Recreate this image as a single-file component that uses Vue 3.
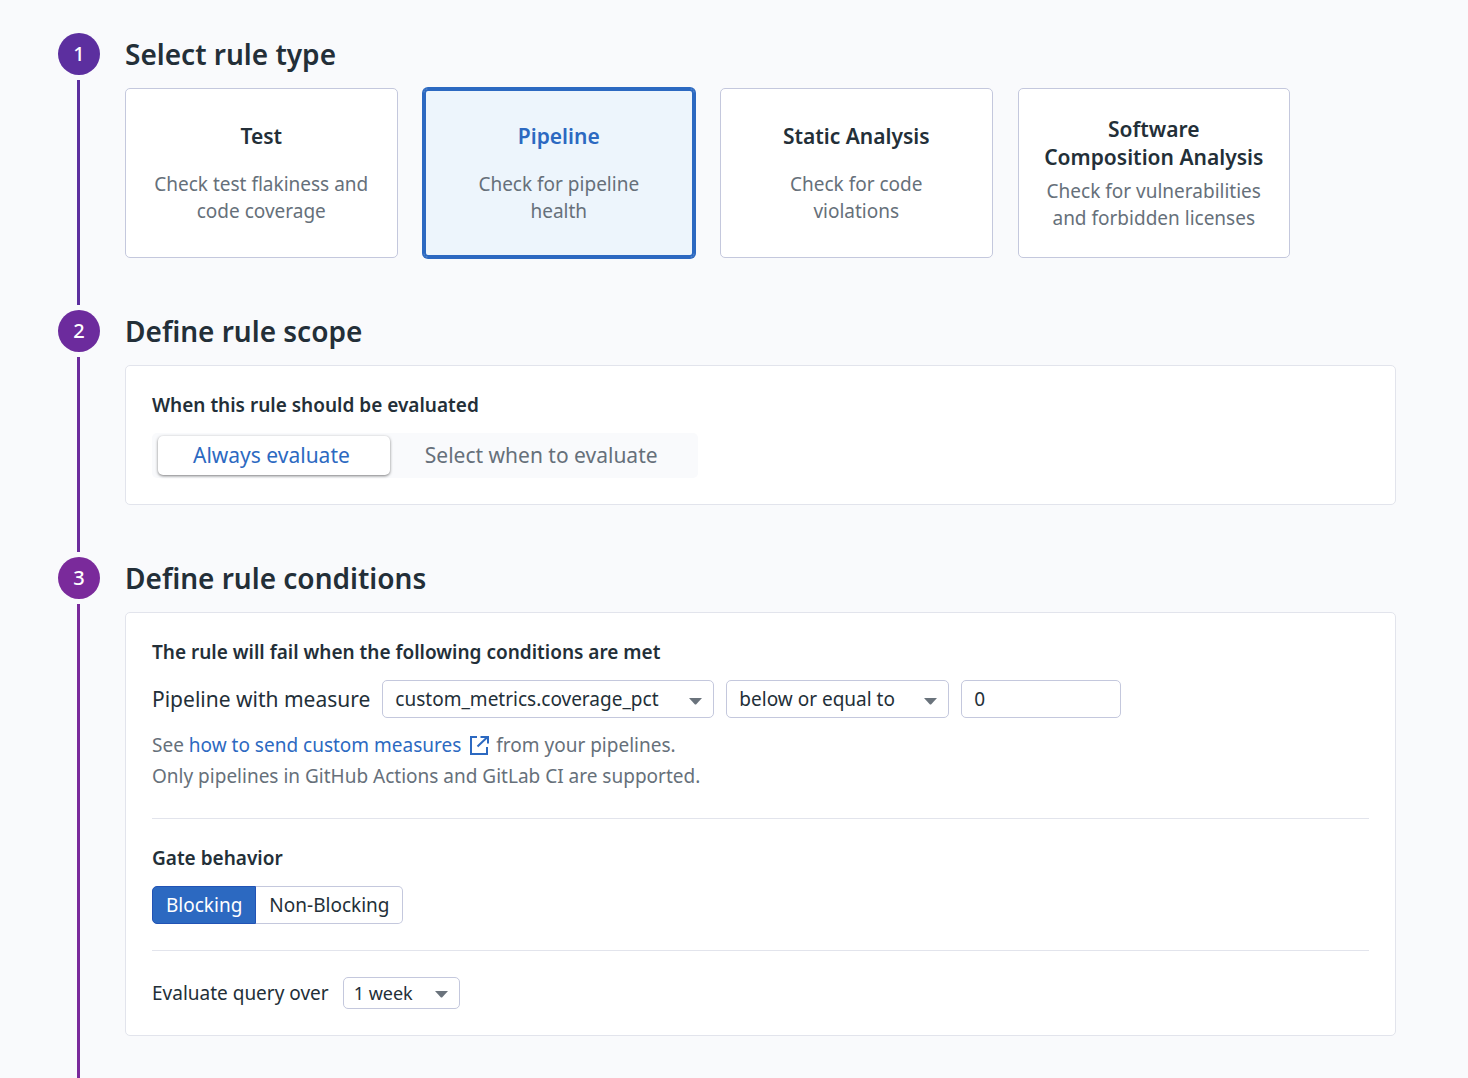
<script setup>
import { ref } from 'vue'

const ruleTypes = [
  { id: 'test', title: 'Test', text: 'Check test flakiness and code coverage' },
  { id: 'pipeline', title: 'Pipeline', text: 'Check for pipeline health' },
  { id: 'static', title: 'Static Analysis', text: 'Check for code violations' },
  { id: 'sca', title: 'Software Composition Analysis', text: 'Check for vulnerabilities and forbidden licenses' },
]
const ruleType = ref('pipeline')
const scope = ref('always')
const blocking = ref(true)
const measure = ref('custom_metrics.coverage_pct')
const operator = ref('below or equal to')
const threshold = ref('0')
const period = ref('1 week')
</script>

<template>
  <main class="page">
    <section class="step step-one">
      <div class="rail"><span class="badge">1</span><span class="line"></span></div>
      <div class="content">
        <h2>Select rule type</h2>
        <div class="cards">
          <button
            v-for="type in ruleTypes"
            :key="type.id"
            type="button"
            class="card"
            :class="{ selected: ruleType === type.id }"
            :aria-pressed="ruleType === type.id"
            @click="ruleType = type.id"
          >
            <span class="card-title">{{ type.title }}</span>
            <span class="card-text">{{ type.text }}</span>
          </button>
        </div>
      </div>
    </section>

    <section class="step step-two">
      <div class="rail"><span class="badge">2</span><span class="line"></span></div>
      <div class="content">
        <h2>Define rule scope</h2>
        <div class="panel">
          <h3>When this rule should be evaluated</h3>
          <div class="switch">
            <button type="button" :class="{ on: scope === 'always' }" @click="scope = 'always'">Always evaluate</button>
            <button type="button" :class="{ on: scope === 'select' }" @click="scope = 'select'">Select when to evaluate</button>
          </div>
        </div>
      </div>
    </section>

    <section class="step step-three">
      <div class="rail"><span class="badge">3</span><span class="line"></span></div>
      <div class="content">
        <h2>Define rule conditions</h2>
        <div class="panel">
          <h3>The rule will fail when the following conditions are met</h3>
          <div class="row">
            <label class="lead" for="measure">Pipeline with measure</label>
            <span class="select measure">
              <select id="measure" v-model="measure">
                <option>custom_metrics.coverage_pct</option>
              </select>
              <svg class="caret" viewBox="0 0 13 7" aria-hidden="true"><path d="M0 0H13L7.500 6Q6.500 7 5.500 6Z" /></svg>
            </span>
            <span class="select operator">
              <select v-model="operator" aria-label="Comparison">
                <option>below or equal to</option>
                <option>above or equal to</option>
              </select>
              <svg class="caret" viewBox="0 0 13 7" aria-hidden="true"><path d="M0 0H13L7.500 6Q6.500 7 5.500 6Z" /></svg>
            </span>
            <input v-model="threshold" class="threshold" type="text" aria-label="Threshold" />
          </div>
          <p class="hint">
            See <a href="#">how to send custom measures<svg class="external" viewBox="0 0 20 20" aria-hidden="true"><path d="M8 2H2V19H18V12M11.500 2H19V8.500M18.500 2L8.500 11.500" /></svg></a> from your pipelines.<br />
            Only pipelines in GitHub Actions and GitLab CI are supported.
          </p>
          <hr />
          <h3>Gate behavior</h3>
          <div class="toggle">
            <button type="button" :class="{ on: blocking }" @click="blocking = true">Blocking</button>
            <button type="button" :class="{ on: !blocking }" @click="blocking = false">Non-Blocking</button>
          </div>
          <hr />
          <div class="row row-period">
            <label for="period">Evaluate query over</label>
            <span class="select period">
              <select id="period" v-model="period">
                <option>1 week</option>
                <option>2 weeks</option>
              </select>
              <svg class="caret" viewBox="0 0 13 7" aria-hidden="true"><path d="M0 0H13L7.500 6Q6.500 7 5.500 6Z" /></svg>
            </span>
          </div>
        </div>
      </div>
    </section>
  </main>
</template>

<style>
body {
  background: #f9fafc;
}
</style>

<style scoped>
.page {
  box-sizing: border-box;
  min-height: 100vh;
  display: flex;
  flex-direction: column;
  padding: 33px 72px 0 58px;
  color: #232f38;
  font: 19px/27px 'Noto Sans', sans-serif;
}
.page * {
  box-sizing: border-box;
}
button,
select,
input {
  margin: 0;
  color: inherit;
  font: inherit;
}
button {
  cursor: pointer;
}
.step {
  display: flex;
  gap: 25px;
}
.step-one { --tone: #5c2f9f; }
.step-two { --tone: #6c2b9d; }
.step-three { --tone: #7a2a9b; flex: 1; }
.rail {
  width: 42px;
  flex: none;
  display: flex;
  flex-direction: column;
}
.badge {
  width: 42px;
  height: 42px;
  border-radius: 50%;
  background: var(--tone);
  color: #fff;
  font-size: 20px;
  font-weight: 500;
  line-height: 41px;
  text-align: center;
}
.line {
  flex: 1;
  width: 3px;
  margin: 5px 0 5px 19px;
  background: var(--tone);
}
.step-three .line {
  margin-bottom: 0;
}
.content {
  flex: 1;
  min-width: 0;
  padding-bottom: 52px;
}
.step-three .content {
  padding-bottom: 42px;
}
h2 {
  margin: 0 0 12px;
  font-size: 28px;
  font-weight: 600;
  line-height: 43px;
}
h3 {
  margin: 0 0 14px;
  font-size: 19px;
  font-weight: 600;
  line-height: 27px;
}
.cards {
  display: grid;
  grid-template-columns: repeat(4, 1fr);
  gap: 25px;
  max-width: 1165px;
}
.card {
  height: 170px;
  display: flex;
  flex-direction: column;
  align-items: center;
  justify-content: center;
  gap: 7px;
  padding: 0 25px;
  border: 1px solid #c4c8dd;
  border-radius: 5px;
  background: #fff;
}
.card-title {
  min-height: 42px;
  font-size: 21px;
  font-weight: 600;
  line-height: 28px;
}
.card-text {
  color: #66707a;
}
.card.selected {
  border-color: #2c69c1;
  background: #edf5fc;
  box-shadow: 0 0 0 1px #2c69c1, inset 0 0 0 2px #2c69c1;
}
.selected .card-title {
  color: #2c69c1;
}
.panel {
  padding: 26px;
  border: 1px solid #e2e4ec;
  border-radius: 5px;
  background: #fff;
}
.switch {
  width: fit-content;
  display: flex;
  padding: 3px 0 3px 6px;
  border-radius: 5px;
  background: #f9fafc;
}
.switch button {
  height: 39px;
  padding: 0 40px 0 35px;
  border: 0;
  border-radius: 5px;
  background: none;
  color: #66707a;
  font-size: 21px;
}
.switch .on {
  background: #fff;
  color: #2c69c1;
  box-shadow: 0 1px 3px rgba(0, 0, 0, 0.5);
}
.row {
  display: flex;
  align-items: center;
  gap: 12px;
}
.row-period {
  gap: 14px;
}
.lead {
  font-size: 21px;
}
.select {
  display: grid;
  align-items: center;
}
.select > * {
  grid-area: 1 / 1;
}
.select select {
  width: 100%;
  height: 38px;
  padding: 0 12px;
  border: 1px solid #c4c8dd;
  border-radius: 5px;
  background: #fff;
  appearance: none;
}
.caret {
  justify-self: end;
  width: 13px;
  height: 7px;
  margin: 4px 12px 0 0;
  fill: #6a737c;
  pointer-events: none;
}
.measure { width: 332px; }
.operator { width: 223px; }
.period { width: 117px; }
.period select {
  height: 32px;
  padding: 0 10px;
  font-size: 18px;
}
.period .caret {
  margin-top: 2px;
}
.threshold {
  width: 160px;
  height: 38px;
  padding: 0 12px;
  border: 1px solid #c4c8dd;
  border-radius: 5px;
  background: #fff;
}
.hint {
  margin: 12px 0 0;
  color: #66707a;
  line-height: 31px;
}
.hint a {
  color: #2c69c1;
  text-decoration: none;
}
.external {
  width: 20px;
  height: 20px;
  margin: 0 2px 0 8px;
  vertical-align: -3px;
  fill: none;
  stroke: currentColor;
  stroke-width: 2;
}
hr {
  height: 1px;
  margin: 26px 0;
  border: 0;
  background: #e2e4ec;
}
.toggle {
  display: flex;
}
.toggle button {
  height: 38px;
  padding: 0 13px;
  border: 1px solid #c4c8dd;
  background: #fff;
}
.toggle button:first-child {
  border-radius: 5px 0 0 5px;
}
.toggle button:last-child {
  border-left: 0;
  border-radius: 0 5px 5px 0;
}
.toggle .on {
  border-color: #2253b5;
  background: #2c69c1;
  color: #fff;
}
</style>
